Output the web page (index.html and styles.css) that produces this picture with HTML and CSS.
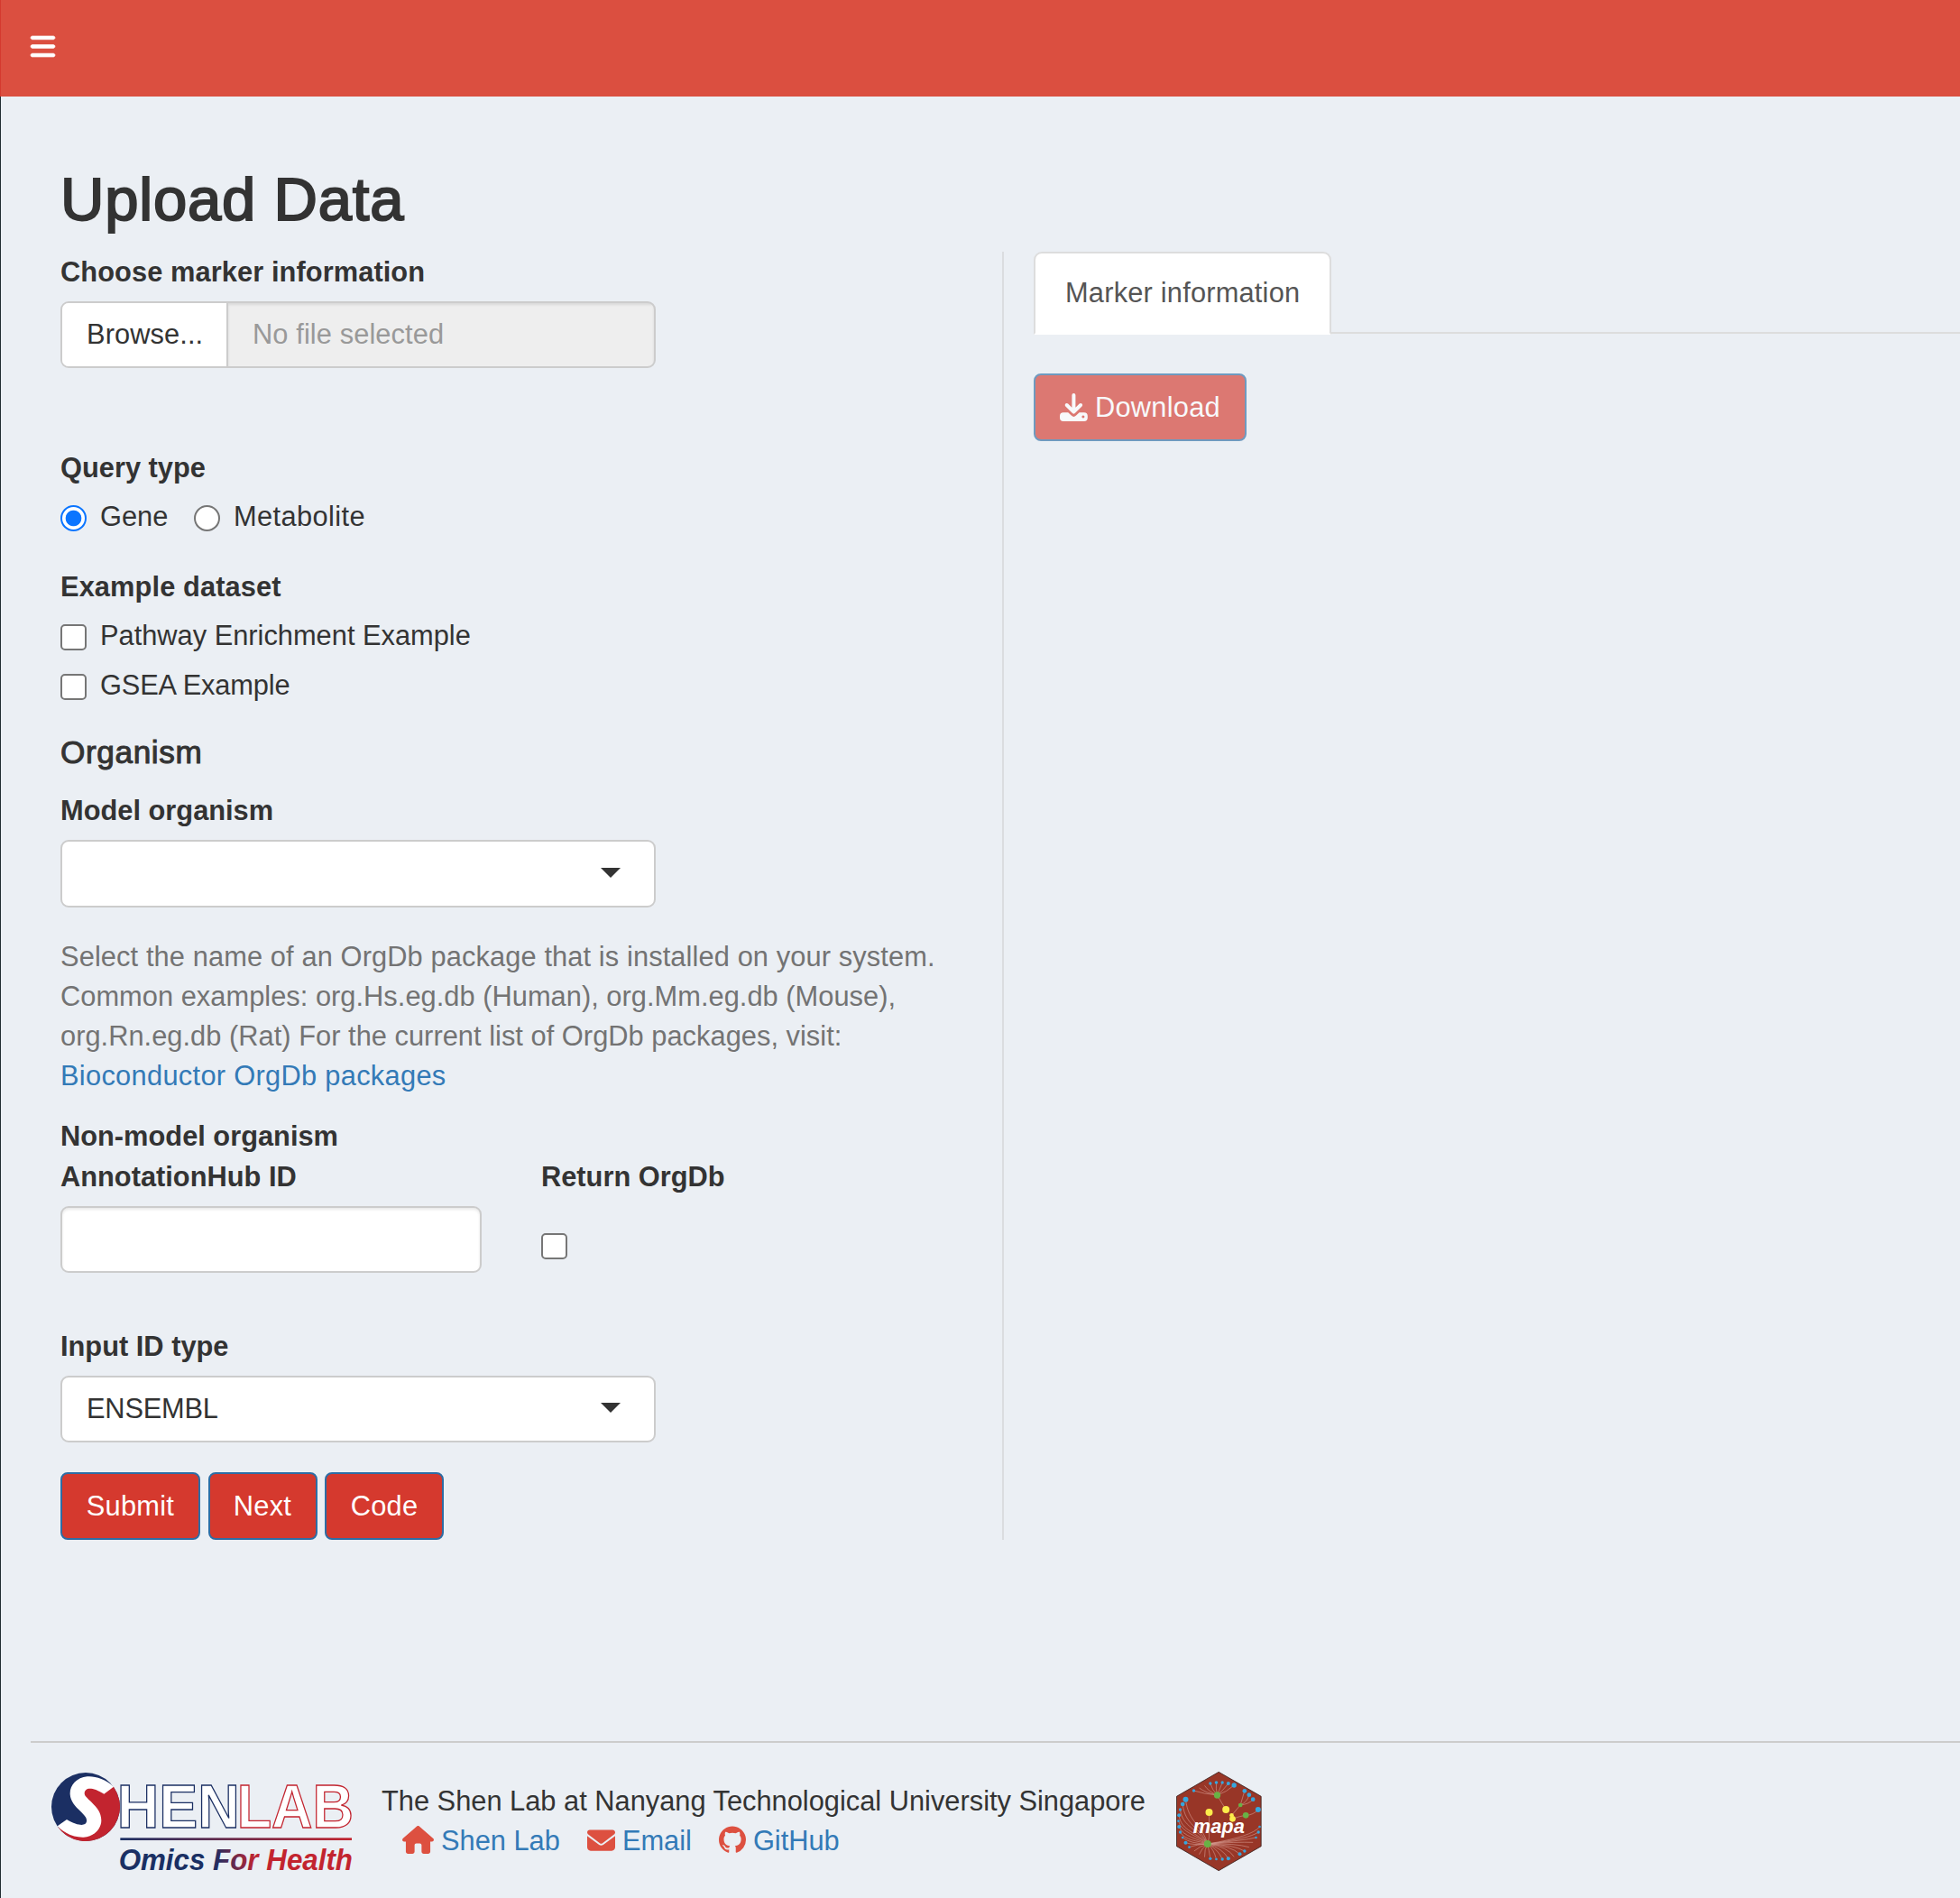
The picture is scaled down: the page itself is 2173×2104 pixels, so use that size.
FILE: index.html
```html
<!DOCTYPE html>
<html lang="en">
<head>
<meta charset="utf-8">
<title>Upload Data</title>
<link rel="stylesheet" href="styles.css">
</head>
<body>
<header class="navbar">
  <svg class="icon-bars" viewBox="0 0 448 512"><path fill="#fff" stroke="#fff" stroke-width="10" d="M0 96C0 78.300 14.300 64 32 64H416c17.700 0 32 14.300 32 32s-14.300 32-32 32H32C14.300 128 0 113.700 0 96zM0 256c0-17.700 14.300-32 32-32H416c17.700 0 32 14.300 32 32s-14.300 32-32 32H32c-17.700 0-32-14.300-32-32zM448 416c0 17.700-14.300 32-32 32H32c-17.700 0-32-14.300-32-32s14.300-32 32-32H416c17.700 0 32 14.300 32 32z"/></svg>
</header>
<div class="wrapper">
  <h2 class="title">Upload Data</h2>
  <main class="row">
    <section class="form-col">
      <label class="label label-first">Choose marker information</label>
      <div class="file-group">
        <span class="file-btn">Browse...</span>
        <span class="file-name">No file selected</span>
      </div>

      <label class="label label-query">Query type</label>
      <div class="options-inline">
        <label class="option option-gene"><input class="radio" type="radio" name="q" checked><span>Gene</span></label>
        <label class="option"><input class="radio" type="radio" name="q"><span class="metabolite">Metabolite</span></label>
      </div>

      <label class="label label-dataset">Example dataset</label>
      <label class="option"><input class="check" type="checkbox"><span>Pathway Enrichment Example</span></label>
      <label class="option option-next"><input class="check" type="checkbox"><span>GSEA Example</span></label>

      <h4 class="subtitle">Organism</h4>
      <label class="label label-model">Model organism</label>
      <div class="select select-model"><span></span><i class="caret"></i></div>

      <p class="help"><span class="help-first">Select the name of an OrgDb package that is installed on your system.</span><br>Common examples: org.Hs.eg.db (Human), org.Mm.eg.db (Mouse),<br>org.Rn.eg.db (Rat) For the current list of OrgDb packages, visit:<br><a class="link link-orgdb">Bioconductor OrgDb packages</a></p>

      <div class="label label-tight">Non-model organism</div>
      <div class="hub">
        <div class="hub-id">
          <label class="label label-hub">AnnotationHub ID</label>
          <input class="text-input" type="text">
        </div>
        <div class="hub-return">
          <label class="label label-hub">Return OrgDb</label>
          <input class="check check-return" type="checkbox">
        </div>
      </div>

      <label class="label label-type">Input ID type</label>
      <div class="select"><span>ENSEMBL</span><i class="caret"></i></div>

      <div class="buttons">
        <button class="btn btn-submit">Submit</button>
        <button class="btn btn-next">Next</button>
        <button class="btn btn-code">Code</button>
      </div>
    </section>

    <section class="result-col">
      <nav class="tabs"><a class="tab">Marker information</a><span class="tabs-line"></span></nav>
      <button class="btn btn-download">
        <svg class="icon-download" viewBox="0 0 31 31"><path fill="none" stroke="#fff" stroke-width="4" stroke-linecap="round" stroke-linejoin="round" d="M15.400 2v18M7.700 13l7.700 7.600 7.700-7.600"/><path fill="#fff" fill-rule="evenodd" d="M3.900 21.200h5.300l3.500 3.400a3.900 3.900 0 0 0 5.400 0l3.500-3.400h5.300a3.900 3.900 0 0 1 3.900 3.900v1.900a3.900 3.900 0 0 1-3.900 3.900H3.900A3.900 3.900 0 0 1 0 27v-1.900a3.900 3.900 0 0 1 3.900-3.900zM25.900 24.600a1.500 1.500 0 1 0 .01 0z"/></svg>
        <span>Download</span>
      </button>
    </section>
  </main>

  <footer class="footer">
    <svg class="logo" viewBox="168 192 1020 336">
      <defs>
        <linearGradient id="line" x1="400" x2="1170" y1="0" y2="0" gradientUnits="userSpaceOnUse"><stop offset="0" stop-color="#1b2f63"/><stop offset="1" stop-color="#c2242f"/></linearGradient>
        <linearGradient id="words" x1="700" x2="870" y1="510" y2="470" gradientUnits="userSpaceOnUse"><stop offset="0" stop-color="#1b2f63"/><stop offset=".2" stop-color="#2b2c5e"/><stop offset=".8" stop-color="#b52635"/><stop offset="1" stop-color="#c2242f"/></linearGradient>
      </defs>
      <circle cx="285" cy="309" r="114" fill="#1b2f63"/>
      <path fill="#c2242f" d="M192 375A114 114 0 0 0 378 243C300 222 257 260 260 270Q265 290 285 309C313 335 320 350 310 370C290 395 240 400 192 375Z"/>
      <path fill="#fff" d="M378 242C350 215 315 206 290 208C255 211 232 238 233 266C234 290 250 306 268 324C282 338 290 346 288 358C285 373 262 374 222 351L191 373C212 396 245 411 278 410C312 408 337 383 337 354C337 328 322 311 305 294C291 280 281 273 281 264C282 246 303 240 346 266Z"/>
      <g class="logo-name" font-size="203" stroke-width="4" fill="#fff">
        <text x="389" y="377" textLength="408" lengthAdjust="spacingAndGlyphs" stroke="#1b2f63">HEN</text>
        <text x="788" y="377" textLength="388" lengthAdjust="spacingAndGlyphs" stroke="#c2242f">LAB</text>
      </g>
      <rect x="400" y="412" width="770" height="8" fill="url(#line)"/>
      <text class="logo-tag" x="395" y="519" font-size="101" textLength="778" lengthAdjust="spacingAndGlyphs" fill="url(#words)">Omics For Health</text>
    </svg>
    <div class="contact">
      <div>The Shen Lab at Nanyang Technological University Singapore</div>
      <div class="links">
        <svg class="icon-home" viewBox="0 0 576 512"><path fill="#dd5040" d="M575.800 255.500c0 18-15 32.100-32 32.100h-32l.7 160.200c0 2.700-.2 5.400-.5 8.100V472c0 22.100-17.900 40-40 40H392c-22.100 0-40-17.900-40-40V352c0-17.700-14.300-32-32-32H256c-17.700 0-32 14.300-32 32v120c0 22.100-17.900 40-40 40H104c-22.100 0-40-17.900-40-40V287.600H32c-18 0-32-14-32-32.100c0-9 3-17 10-24L266.400 8c7-7 15-8 22-8s15 2 21 7L564.800 231.500c8 7 12 15 11 24z"/></svg>
        <a class="link link-home">Shen Lab</a>
        <svg class="icon-mail" viewBox="0 64 512 384"><path fill="#dd5040" d="M48 64C21.500 64 0 85.500 0 112c0 15.100 7.100 29.300 19.200 38.400L236.800 313.600c11.400 8.500 27 8.500 38.400 0L492.800 150.400c12.100-9.100 19.200-23.300 19.200-38.400c0-26.500-21.500-48-48-48H48zM0 176V384c0 35.300 28.700 64 64 64H448c35.300 0 64-28.700 64-64V176L294.400 339.200c-22.800 17.100-54 17.100-76.800 0L0 176z"/></svg>
        <a class="link link-mail">Email</a>
        <svg class="icon-github" viewBox="0 0 16 16"><path fill="#dd5040" d="M8 0C3.580 0 0 3.580 0 8c0 3.540 2.290 6.530 5.470 7.590.4.070.55-.17.55-.38 0-.19-.01-.82-.01-1.490-2.010.37-2.530-.49-2.690-.94-.09-.23-.48-.94-.82-1.130-.28-.15-.68-.52-.01-.53.630-.01 1.080.58 1.230.82.720 1.210 1.870.87 2.330.66.070-.52.280-.87.510-1.070-1.780-.2-3.640-.89-3.640-3.950 0-.87.310-1.590.82-2.150-.08-.2-.36-1.020.08-2.120 0 0 .67-.21 2.200.82.640-.18 1.320-.27 2-.27s1.360.09 2 .27c1.530-1.040 2.200-.82 2.200-.82.440 1.100.160 1.920.08 2.120.510.56.820 1.270.820 2.150 0 3.070-1.870 3.750-3.650 3.950.290.25.540.73.540 1.480 0 1.070-.01 1.930-.01 2.200 0 .21.150.46.550.38A8.010 8.010 0 0 0 16 8c0-4.420-3.580-8-8-8z"/></svg>
        <a class="link">GitHub</a>
      </div>
    </div>
    <svg class="hex" viewBox="70 69 290 336">
      <path fill="#983627" stroke="#3b2422" stroke-width="2.500" d="M214 73L355 154V320L214 401L74 320V154Z"/>
      <g fill="none" stroke="#d79c92" stroke-width="1.800">
        <path d="M209 150Q165 146 131 135M209 150Q170 142 149 126M209 150Q180 138 167 118M209 150Q192 132 186 111M209 150Q204 128 206 108M209 150Q218 128 226 108M209 150Q228 135 246 111M209 150Q240 140 265 117M209 150Q224 176 238 198M182 207V290L177 312M257 217L286 183L300 136M286 183Q310 172 315 149M286 183Q315 180 328 164M260 229Q285 219 304 217Q330 216 345 198"/>
        <path d="M177 312C160 250 112 240 104 164M177 312C150 255 102 250 94 180M177 312C145 262 92 255 86 198M177 312C145 275 88 270 82 217M177 312C145 285 90 275 80 236M177 312C145 295 95 288 82 255M177 312C145 302 100 300 86 273M177 312Q120 312 94 291M177 312Q130 317 104 308M177 312Q140 314 116 323M177 312Q150 320 132 336M177 312Q158 325 149 347M177 312Q166 330 167 356M177 312Q182 335 186 361M177 312Q198 330 206 363M177 312Q212 330 226 363M177 312Q228 328 246 361M177 312Q245 322 265 355M177 312Q255 318 284 346M177 312Q265 315 300 336M177 312Q270 310 315 323M177 312Q275 305 328 307M177 312Q300 300 338 291M177 312Q315 295 346 273M177 312Q325 288 350 255"/>
      </g>
      <g fill="#35a7df">
        <circle cx="131" cy="135" r="5"/><circle cx="186" cy="111" r="5"/><circle cx="206" cy="108" r="5.500"/><circle cx="226" cy="108" r="5"/><circle cx="246" cy="111" r="6"/><circle cx="265" cy="117" r="8"/><circle cx="300" cy="136" r="7"/><circle cx="315" cy="149" r="7"/><circle cx="328" cy="164" r="7"/><circle cx="345" cy="198" r="9"/><circle cx="104" cy="164" r="9"/><circle cx="94" cy="180" r="7"/><circle cx="86" cy="198" r="5"/><circle cx="82" cy="217" r="6"/><circle cx="80" cy="236" r="4"/><circle cx="82" cy="255" r="6"/><circle cx="86" cy="273" r="5"/><circle cx="94" cy="291" r="4"/><circle cx="104" cy="308" r="6"/><circle cx="116" cy="323" r="4"/><circle cx="186" cy="361" r="5"/><circle cx="206" cy="363" r="4"/><circle cx="226" cy="363" r="5"/><circle cx="246" cy="361" r="6"/><circle cx="284" cy="346" r="6"/><circle cx="300" cy="336" r="5"/><circle cx="338" cy="291" r="4"/><circle cx="346" cy="273" r="5"/><circle cx="350" cy="255" r="4"/>
      </g>
      <g fill="#68b245"><circle cx="209" cy="150" r="11"/><circle cx="286" cy="183" r="7"/><circle cx="304" cy="217" r="10"/><circle cx="177" cy="312" r="12"/></g>
      <g fill="#fcec4b"><circle cx="182" cy="207" r="12"/><circle cx="238" cy="198" r="12"/><circle cx="257" cy="217" r="7"/><circle cx="260" cy="229" r="10"/></g>
      <text class="hex-name" x="129" y="275" font-size="67" textLength="171" lengthAdjust="spacingAndGlyphs" fill="#fff">mapa</text>
    </svg>
  </footer>
</div>
</body>
</html>
```
FILE: styles.css
```css
* { box-sizing: border-box; }

body {
  margin: 0;
  background: #ebeff4;
  color: #333;
  font: 30.8px/44px "Liberation Sans", Arial, sans-serif;
}

h2, h4, p { margin: 0; }
label { display: block; }
svg { display: block; flex: none; overflow: visible; }

.navbar {
  height: 107px;
  padding: 36px 0 0 33px;
  background: #db4f40;
  border-left: 1px solid #d5392e;
}
.icon-bars { width: 27px; height: 31px; }

.wrapper {
  height: 1997px;
  padding-top: 77px;
  border-left: 1px solid #222d32;
}

.title {
  height: 95px;
  padding-left: 66px;
  font-size: 67px;
  font-weight: 400;
  line-height: 73px;
  letter-spacing: .8px;
  -webkit-text-stroke: 2px #333;
}

.row {
  display: grid;
  grid-template-columns: 1112px 1fr;
  height: 1428px;
}

.form-col {
  padding-left: 66px;
  border-right: 2px solid #dadcdf;
}

.label {
  margin-bottom: 11px;
  font-weight: 700;
}
.label-first { margin: 1px 0 10px; letter-spacing: .08px; }
.label-query { margin-top: 89px; margin-bottom: 10px; }
.label-dataset { margin-top: 34px; margin-bottom: 10px; letter-spacing: .1px; }
.label-model { margin-bottom: 10px; }
.label-tight { margin: 23px 0 1px; }
.label-hub { margin-bottom: 10px; }
.label-type { margin-top: 60px; margin-bottom: 10px; }

.file-group {
  display: flex;
  width: 660px;
  height: 74px;
  border: 2px solid #ccc;
  border-radius: 9px;
  background: #eee;
  line-height: 70px;
  letter-spacing: .1px;
  overflow: hidden;
}
.file-btn {
  width: 184px;
  padding-left: 27px;
  background: #fff;
  border-right: 2px solid #ccc;
}
.file-name {
  flex: 1;
  padding-left: 27px;
  color: #999;
  box-shadow: inset 0 2px 3px rgba(0, 0, 0, .09);
}

.options-inline { display: flex; }
.option { display: flex; gap: 15px; }
.option-gene { width: 148px; }
.option-next { margin-top: 11px; letter-spacing: -.15px; }
.metabolite { letter-spacing: .4px; }

.radio, .check {
  appearance: none;
  flex: none;
  width: 29px;
  height: 29px;
  margin: 9px 0 0;
  border: 2px solid #767676;
  background: #fff;
}
.radio { border-radius: 50%; }
.radio:checked {
  border-color: #0b75ff;
  background: radial-gradient(circle, #0b75ff 8.4px, #fff 9.2px);
}
.check { border-radius: 5px; }

.subtitle {
  margin: 32px 0 24px;
  font-size: 35.2px;
  font-weight: 400;
  line-height: 39px;
  letter-spacing: .6px;
  -webkit-text-stroke: 1px #333;
}

.select {
  display: flex;
  align-items: center;
  justify-content: space-between;
  width: 660px;
  height: 74px;
  padding: 0 37px 0 27px;
  border: 2px solid #ccc;
  border-radius: 9px;
  background: #fff;
  letter-spacing: -.2px;
}
.select-model { height: 75px; }
.caret {
  margin-bottom: 3px;
  border: 11px solid transparent;
  border-top-color: #333;
  border-bottom-width: 0;
}

.help { margin-top: 33px; color: #737373; white-space: nowrap; letter-spacing: .03px; }
.help-first { letter-spacing: .11px; }
.link { color: #337ab7; }
.link-orgdb { letter-spacing: .3px; }

.hub { display: flex; gap: 66px; }
.hub-id { width: 467px; }
.hub-return { display: grid; align-content: start; }
.text-input {
  display: block;
  width: 467px;
  height: 74px;
  border: 2px solid #ccc;
  border-radius: 9px;
  background: #fff;
  box-shadow: inset 0 2px 3px rgba(0, 0, 0, .09);
}
.check-return { margin-top: 30px; }

.buttons { display: flex; gap: 8.5px; margin-top: 33px; }
.btn {
  height: 75px;
  padding: 0;
  border: 2px solid #2e6da4;
  border-radius: 8px;
  background: #d5392e;
  color: #fff;
  font: inherit;
  letter-spacing: .25px;
}
.btn-submit { width: 155px; }
.btn-next { width: 121px; }
.btn-code { width: 132px; }

.result-col { padding-left: 33px; }
.tabs { display: flex; align-items: flex-end; height: 92px; }
.tab {
  width: 330px;
  height: 92px;
  padding-left: 33px;
  border: 2px solid #ddd;
  border-bottom-color: #fff;
  border-radius: 9px 9px 0 0;
  background: #fff;
  color: #555;
  line-height: 88px;
  letter-spacing: .2px;
}
.tabs-line { flex: 1; height: 2px; margin-bottom: 1px; background: #ddd; }
.btn-download {
  display: flex;
  align-items: center;
  gap: 8px;
  width: 236px;
  margin-top: 43px;
  padding-left: 27px;
  opacity: .65;
}
.icon-download { width: 31px; height: 31px; }

.footer {
  display: flex;
  align-items: flex-start;
  margin: 223px 0 0 33px;
  padding: 32px 0 0 22px;
  border-top: 2px solid #ccc;
}
.logo { width: 340px; height: 112px; }
.logo-name { font-weight: 700; }
.logo-tag, .hex-name { font-weight: 700; font-style: italic; }

.contact { width: 847px; margin: 11px 0 0 27px; white-space: nowrap; }
.links { display: flex; padding-left: 23px; }
.icon-home { width: 35px; height: 31px; margin: 5px 8px 0 0; }
.link-home { margin-right: 30px; }
.icon-mail { width: 31px; height: 24px; margin: 9px 8px 0 0; }
.link-mail { margin-right: 30px; }
.icon-github { width: 30px; height: 31px; margin: 5px 8px 0 0; }
.hex { width: 97px; height: 112px; margin: -1px 0 0 33px; }
```
